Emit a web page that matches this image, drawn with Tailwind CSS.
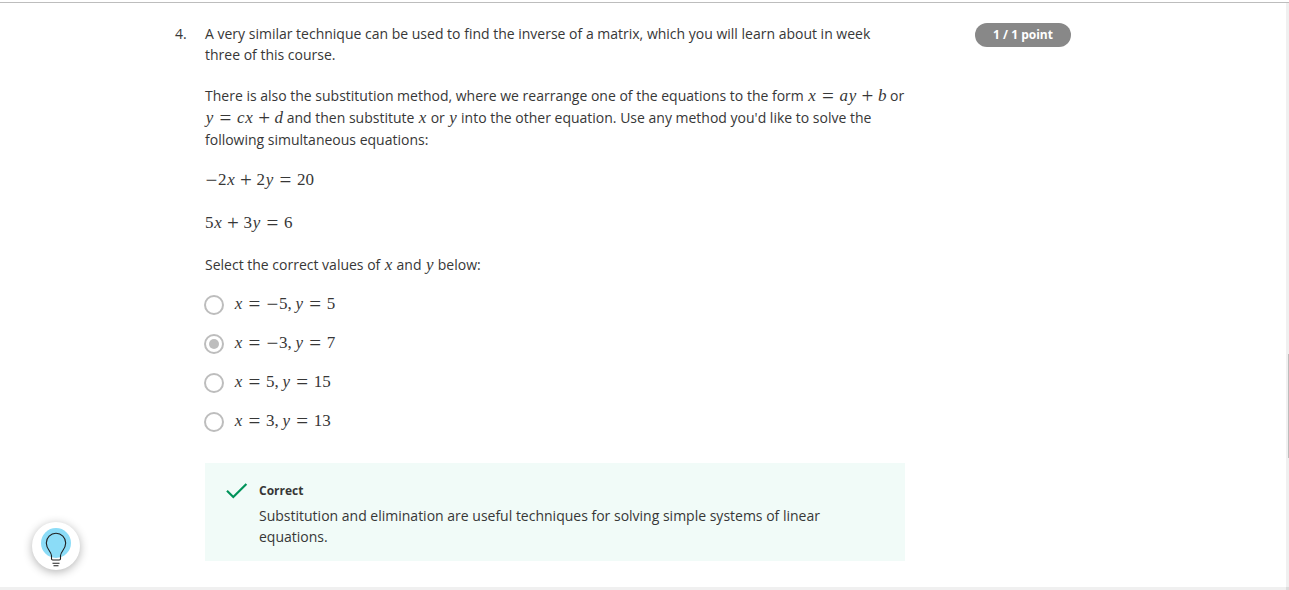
<!DOCTYPE html>
<html lang="en">
<head>
<meta charset="utf-8">
<meta name="viewport" content="width=device-width, initial-scale=1">
<title>Quiz</title>
<script src="https://cdn.jsdelivr.net/npm/@tailwindcss/browser@4"></script>
</head>
<body class="bg-white text-[#373737] text-sm font-['Open_Sans',sans-serif]">
<div class="flex min-h-screen flex-col pt-[2px]">
  <div class="flex flex-1 border-t border-[#bdbdbd]">
    <main class="flex-1 pt-5 pr-6 pb-[26px] pl-[175px]">
      <div class="flex max-w-[896px] items-start">
        <div class="w-[30px] shrink-0 leading-[22px]">4.</div>
        <div class="w-full max-w-[700px]">
          <p class="leading-[21px]">A very similar technique can be used to find the inverse of a matrix, which you will learn about in week three of this course.</p>
          <p class="mt-5 leading-[22px]">There is also the substitution method, where we rearrange one of the equations to the form <var>x=ay+b</var> or <var>y=cx+d</var> and then substitute <var>x</var> or <var>y</var> into the other equation. Use any method you'd like to solve the following simultaneous equations:</p>
          <p class="mt-[19px] h-[22px] leading-[22px]"><var>~2x+2y=20</var></p>
          <p class="mt-5 h-[22px] leading-[22px]"><var>5x+3y=6</var></p>
          <p class="mt-5 h-[22px] leading-[22px]">Select the correct values of <var>x</var> and <var>y</var> below:</p>
          <fieldset class="-ml-px mt-[18px] flex flex-col gap-[17px]" aria-label="Values of x and y">
            <label class="flex h-[22px] items-center gap-[10px]"><input type="radio" name="answer" class="size-5 shrink-0 appearance-none rounded-full border-2 border-[#bdbdbd] bg-white bg-clip-content p-[3px] checked:bg-[#bdbdbd]"><span class="flex pb-[2px]"><var>x=~5,y=5</var></span></label>
            <label class="flex h-[22px] items-center gap-[10px]"><input type="radio" name="answer" checked class="size-5 shrink-0 appearance-none rounded-full border-2 border-[#bdbdbd] bg-white bg-clip-content p-[3px] checked:bg-[#bdbdbd]"><span class="flex pb-[2px]"><var>x=~3,y=7</var></span></label>
            <label class="flex h-[22px] items-center gap-[10px]"><input type="radio" name="answer" class="size-5 shrink-0 appearance-none rounded-full border-2 border-[#bdbdbd] bg-white bg-clip-content p-[3px] checked:bg-[#bdbdbd]"><span class="flex pb-[2px]"><var>x=5,y=15</var></span></label>
            <label class="flex h-[22px] items-center gap-[10px]"><input type="radio" name="answer" class="size-5 shrink-0 appearance-none rounded-full border-2 border-[#bdbdbd] bg-white bg-clip-content p-[3px] checked:bg-[#bdbdbd]"><span class="flex pb-[2px]"><var>x=3,y=13</var></span></label>
          </fieldset>
          <section class="mt-[30px] flex bg-[#f1fbf8] pt-[18px] pr-14 pb-[13px] pl-5">
            <svg class="mr-[10px] size-6 shrink-0" viewBox="0 0 24 24" fill="none" stroke="#00935a" stroke-width="2.2" aria-hidden="true"><path d="M2 9.8 8.3 16 21.4 3"/></svg>
            <div>
              <h2 class="text-xs leading-5 font-bold">Correct</h2>
              <p class="mt-1 pb-[1px] leading-[21px]">Substitution and elimination are useful techniques for solving simple systems of linear equations.</p>
            </div>
          </section>
        </div>
        <div class="ml-[70px] w-24 shrink-0 rounded-full bg-[#888] text-center text-xs leading-6 font-bold text-white">1 / 1 point</div>
      </div>
    </main>
    <div class="flex w-[3px] flex-col items-end bg-[#f0f0f0]"><div class="mt-[351px] h-[104px] w-px bg-[#bdbdbd]"></div></div>
  </div>
  <div class="flex h-[3px] justify-end bg-[#f0f0f0]"><div class="w-[3px] bg-[#dcdcdc]"></div></div>
</div>
<button aria-label="Hints" class="fixed bottom-5 left-8 size-12 rounded-full bg-white shadow-[0_2px_10px_rgba(0,0,0,0.3)]">
  <svg viewBox="0 0 48 48" fill="none" stroke="#1f1f1f" stroke-width="1.1" aria-hidden="true">
    <circle cx="24" cy="21" r="15" fill="#8bdcf7" stroke="none"/>
    <path d="M19.5 36.8v-3c0-4.200-5.200-6.500-5.200-12.800a9.700 9.700 0 0 1 19.400 0c0 6.300-5.200 8.600-5.200 12.800v3c0 .8-.5 1.200-1.200 1.200h-6.600c-.7 0-1.200-.4-1.200-1.200Z"/>
    <path d="M20.500 41.300h7M21.500 43.800h5"/>
  </svg>
</button>
<script>
  // Sets short formulas with mathematical spacing; "~" is a unary minus.
  const styles = {
    x: 'w-[9px] text-center italic',
    y: 'w-[9px] text-center italic',
    '=': 'w-[13px] mx-[5px] text-center text-[21px]',
    '+': 'w-[13px] mx-1 text-center text-[21px]',
    '~': 'w-[13px] text-center text-[21px]',
    ',': 'mr-[3px]'
  };
  document.querySelectorAll('var').forEach(v => {
    const source = v.textContent;
    v.textContent = '';
    v.className = "inline-flex items-center whitespace-nowrap not-italic text-[17px] leading-5 font-['Liberation_Serif',serif]";
    for (const c of source) {
      const s = document.createElement('span');
      s.className = styles[c] || (/[a-z]/.test(c) ? 'italic' : '');
      s.textContent = c === '~' ? '\u2212' : c;
      v.append(s);
    }
  });
</script>
</body>
</html>
